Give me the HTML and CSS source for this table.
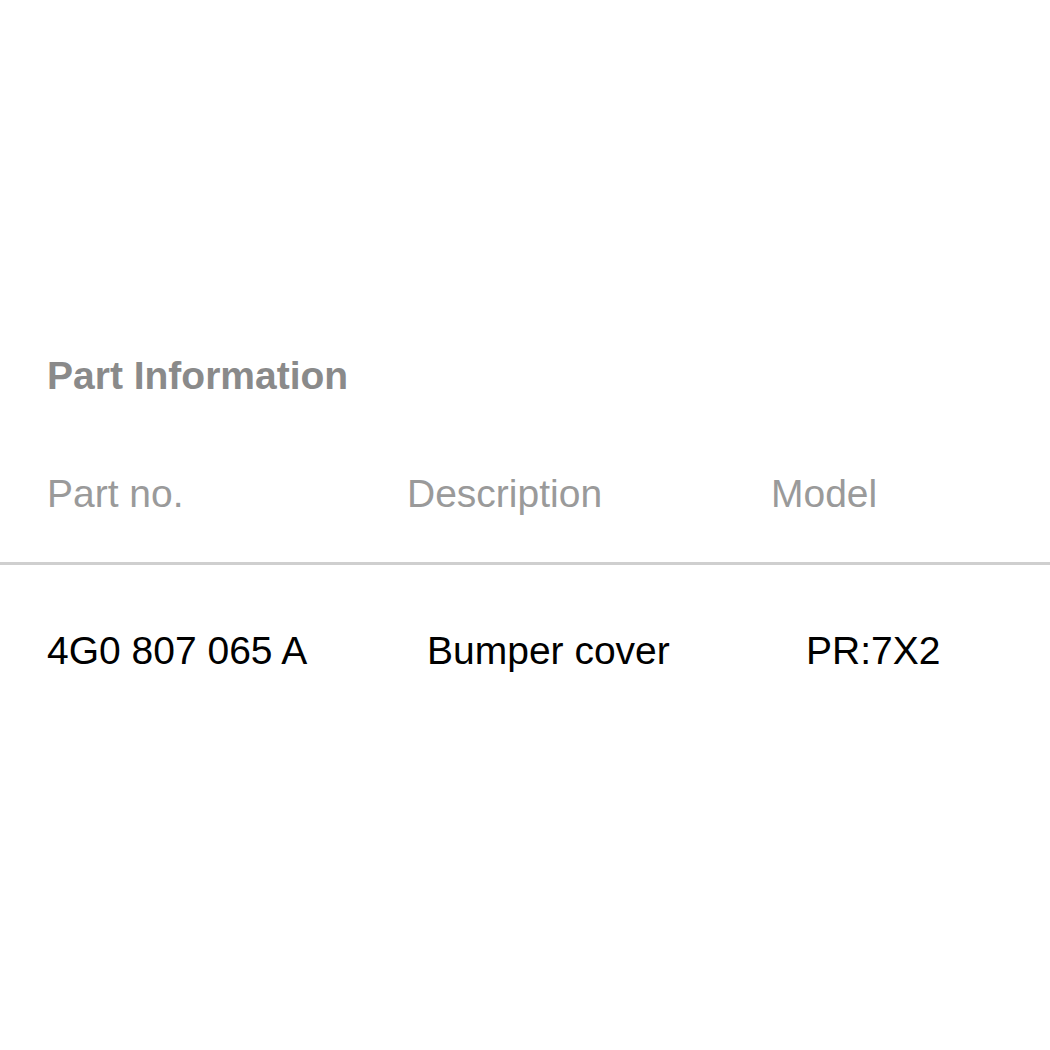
FILE: index.html
```html
<!DOCTYPE html>
<html lang="en">

<head>
    <meta charset="UTF-8">
    <meta name="viewport" content="width=device-width, initial-scale=1.0">
    <title>Part Information</title>
    <link rel="stylesheet" href="styles.css">
</head>

<body>
    <div class="part-info">
        <h2 class="title">Part Information</h2>

        <div class="table">
            <div class="row head">
                <div class="cell">Part no.</div>
                <div class="cell">Description</div>
                <div class="cell">Model</div>
            </div>
            <div class="row data">
                <div class="cell">4G0 807 065 A</div>
                <div class="cell desc">Bumper cover</div>
                <div class="cell model">PR:7X2</div>
            </div>
        </div>
    </div>
</body>

</html>
```

FILE: styles.css
```css
body {
    font-family: "Liberation Sans", Arial, sans-serif;
    margin: 0;
    padding: 0;
    background-color: #fff;
}

.part-info {
    padding-top: 354px;
}

.title {
    margin: 0;
    padding-left: 47px;
    font-size: 39px;
    line-height: 44px;
    font-weight: bold;
    color: #8a8a8a;
}

.table {
    margin-top: 74px;
}

.row {
    display: grid;
    grid-template-columns: 360px 364px 1fr;
    padding-left: 47px;
    font-size: 39px;
    line-height: 44px;
}

.head {
    color: #9a9a9a;
    padding-bottom: 46px;
    border-bottom: 3px solid #cfcfcf;
}

.data {
    color: #000;
    margin-top: 64px;
}

.data .desc {
    padding-left: 20px;
}

.data .model {
    padding-left: 35px;
}
```
